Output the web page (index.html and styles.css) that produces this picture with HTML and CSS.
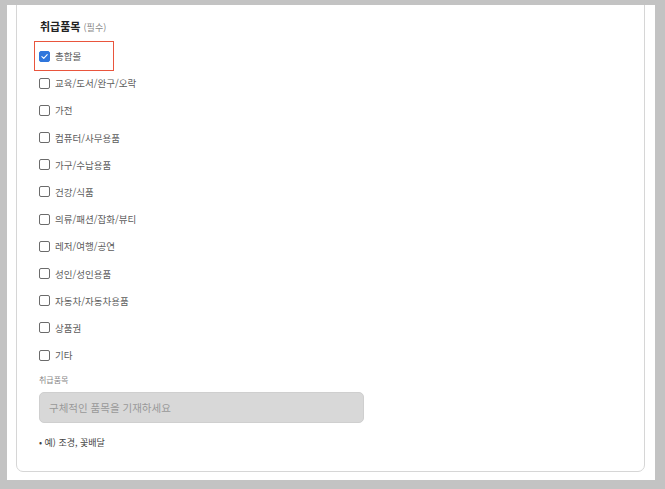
FILE: index.html
```html
<!DOCTYPE html>
<html lang="ko">
<head>
<meta charset="utf-8">
<link rel="stylesheet" href="styles.css">
</head>
<body>
<div class="panel">
  <div class="card">
    <div class="title">취급품목 <span class="req">(필수)</span></div>
    <div class="list">
      <label class="opt selected"><span class="box checked"><svg viewBox="0 0 12 12" width="9" height="9"><path d="M2.5 6.2 L5 8.6 L9.6 3.4" fill="none" stroke="#fff" stroke-width="1.4" stroke-linecap="round" stroke-linejoin="round"/></svg></span><span>총합몰</span></label>
      <label class="opt"><span class="box"></span><span>교육/도서/완구/오락</span></label>
      <label class="opt"><span class="box"></span><span>가전</span></label>
      <label class="opt"><span class="box"></span><span>컴퓨터/사무용품</span></label>
      <label class="opt"><span class="box"></span><span>가구/수납용품</span></label>
      <label class="opt"><span class="box"></span><span>건강/식품</span></label>
      <label class="opt"><span class="box"></span><span>의류/패션/잡화/뷰티</span></label>
      <label class="opt"><span class="box"></span><span>레저/여행/공연</span></label>
      <label class="opt"><span class="box"></span><span>성인/성인용품</span></label>
      <label class="opt"><span class="box"></span><span>자동차/자동차용품</span></label>
      <label class="opt"><span class="box"></span><span>상품권</span></label>
      <label class="opt"><span class="box"></span><span>기타</span></label>
    </div>
    <div class="sublabel">취급품목</div>
    <div class="input">구체적인 품목을 기재하세요</div>
    <div class="note">• 예) 조경, 꽃배달</div>
  </div>
</div>
</body>
</html>
```
FILE: styles.css
```css
html, body {
  margin: 0;
  padding: 0;
  background: #c3c3c3;
  font-family: "Noto Sans CJK KR", "Noto Sans", sans-serif;
}
.panel {
  margin: 5px 10px 0 7px;
  height: 475px;
  background: #fff;
  overflow: hidden;
  padding: 0 10px 0 9px;
  box-sizing: border-box;
}
.card {
  margin-top: -10px;
  height: 477px;
  box-sizing: border-box;
  border: 1px solid #d6d6d6;
  border-radius: 7px;
  padding: 22px 22px 0 22px;
}
.title {
  height: 16px;
  line-height: 16px;
  font-size: 11px;
  font-weight: 700;
  color: #222;
  padding-left: 1px;
}
.req {
  font-weight: 400;
  font-size: 9px;
  color: #888;
}
.list {
  margin-top: 13.5px;
  display: flex;
  flex-direction: column;
  gap: 10.2px;
}
.opt {
  display: flex;
  align-items: center;
  height: 17px;
  font-size: 9.5px;
  color: #5c5c5c;
  gap: 5px;
}
.opt.selected {
  box-sizing: border-box;
  width: 80px;
  height: 30px;
  margin: -6.5px 0 -6.5px -5px;
  padding-left: 4px;
  border: 1px solid #e9553d;
}
.box {
  width: 11px;
  height: 11px;
  box-sizing: border-box;
  border: 1px solid #6b6b6b;
  border-radius: 2px;
  display: flex;
  align-items: center;
  justify-content: center;
  flex: none;
}
.box.checked {
  background: #2f76dc;
  border-color: #2f76dc;
}
.sublabel {
  margin-top: 10.3px;
  font-size: 8px;
  line-height: 12px;
  color: #888;
}
.input {
  margin-top: 6px;
  width: 325px;
  height: 31px;
  box-sizing: border-box;
  background: #d8d8d8;
  border: 1px solid #cfcfcf;
  border-radius: 5px;
  padding-left: 9px;
  display: flex;
  align-items: center;
  font-size: 10.5px;
  color: #999;
}
.note {
  margin-top: 14px;
  font-size: 9px;
  line-height: 12px;
  color: #444;
}
```
